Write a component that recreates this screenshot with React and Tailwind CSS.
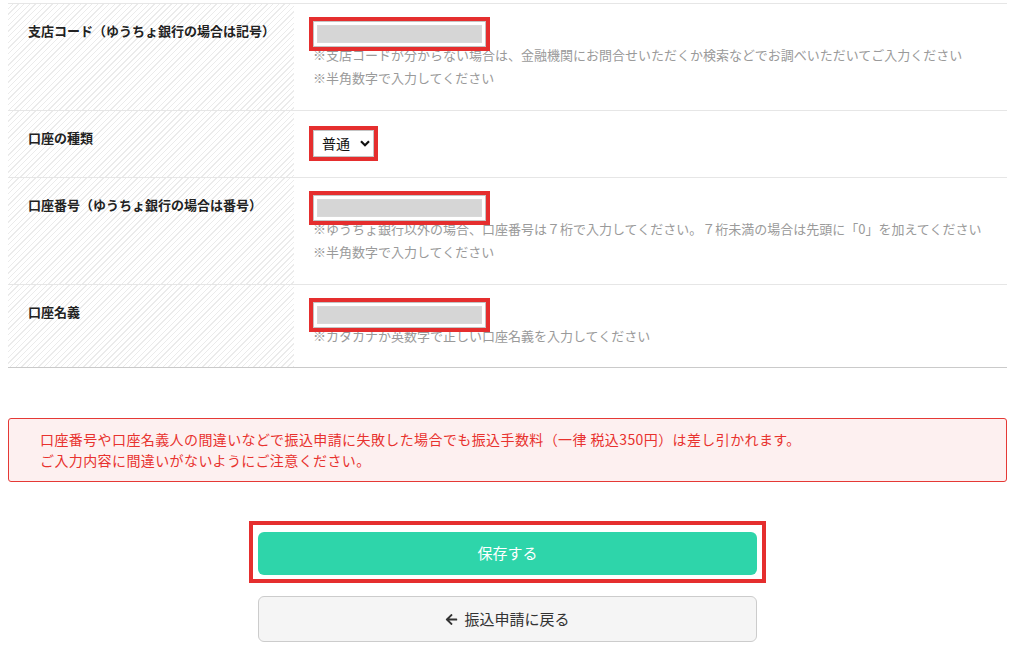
import { FaArrowLeft } from "react-icons/fa";

const font = "font-['Meiryo','Noto_Sans_CJK_JP','Noto_Sans',sans-serif]";

const hatch =
  "bg-[repeating-linear-gradient(135deg,#ffffff_0px,#ffffff_3px,#ebebeb_3px,#ebebeb_4px)]";

// Redacted text field with the red highlight frame drawn as an outline
const MaskedInput = () => (
  <div className="w-[173px] h-[26px] border border-[#c4c4c4] bg-white p-[3px] outline-[4px] outline-solid outline-[#e52e2e] outline-offset-[0px]">
    <div className="h-full border border-[#d9d9d9] bg-[#d6d6d6]" />
  </div>
);

const Notes = ({ lines }) => (
  <div className="-mt-[4px] text-[13px] leading-[23px] text-[#9a9a9a]">
    {lines.map((l) => (
      <p key={l}>{l}</p>
    ))}
  </div>
);

const Row = ({ label, children, valuePad = "pt-[17px] pb-[21px]" }) => (
  <div className="flex border-t border-[#e6e6e6]">
    <div className={`w-[286px] shrink-0 px-[20px] pt-[13px] pb-[20px] ${hatch}`}>
      <span className="text-[13px] leading-[20px] font-bold text-[#222]">{label}</span>
    </div>
    <div className={`flex-1 pl-[19px] pr-[10px] ${valuePad}`}>{children}</div>
  </div>
);

export default function App() {
  return (
    <div className={`${font} bg-white min-h-[656px] pt-[3px] pb-[14px]`}>
      <div className="mx-[8px] border-b border-[#cacaca]">
        <Row label="支店コード（ゆうちょ銀行の場合は記号）">
          <MaskedInput />
          <Notes
            lines={[
              "※支店コードが分からない場合は、金融機関にお問合せいただくか検索などでお調べいただいてご入力ください",
              "※半角数字で入力してください",
            ]}
          />
        </Row>
        <Row label="口座の種類" valuePad="pt-[19px] pb-[20px]">
          <div className="inline-flex items-center gap-[10px] h-[27px] w-[61px] border border-[#c4c4c4] bg-white pl-[8px] text-[14px] text-[#111] outline-[4px] outline-solid outline-[#e52e2e]">
            <span>普通</span>
            <svg width="10" height="7" viewBox="0 0 10 7">
              <path d="M1 1.2 5 5.2 9 1.2" fill="none" stroke="#111" strokeWidth="2.2" />
            </svg>
          </div>
        </Row>
        <Row label="口座番号（ゆうちょ銀行の場合は番号）">
          <MaskedInput />
          <Notes
            lines={[
              "※ゆうちょ銀行以外の場合、口座番号は７桁で入力してください。７桁未満の場合は先頭に「0」を加えてください",
              "※半角数字で入力してください",
            ]}
          />
        </Row>
        <Row label="口座名義" valuePad="pt-[17px] pb-[20px]">
          <MaskedInput />
          <Notes lines={["※カタカナか英数字で正しい口座名義を入力してください"]} />
        </Row>
      </div>

      {/* fee warning */}
      <div className="mx-[8px] mt-[50px] rounded-[3px] border border-[#e53935] bg-[#fdf0f0] px-[31px] py-[10px] text-[14px] leading-[21px] tracking-[0.4px] text-[#e8322e]">
        <p>口座番号や口座名義人の間違いなどで振込申請に失敗した場合でも振込手数料（一律 税込350円）は差し引かれます。</p>
        <p>ご入力内容に間違いがないようにご注意ください。</p>
      </div>

      <div className="mt-[39px] flex flex-col items-center">
        <div className="border-[4px] border-[#e52e2e] px-[5px] pt-[7px] pb-[4px]">
          <button className="w-[499px] h-[43px] rounded-[6px] bg-[#2ed5aa] text-[15px] text-white">
            保存する
          </button>
        </div>
        <button className="mt-[13px] w-[499px] h-[46px] rounded-[6px] border border-[#cccccc] bg-[#f5f5f5] text-[15px] text-[#333] flex items-center justify-center gap-[6px]">
          <FaArrowLeft className="w-[13px] h-[13px]" />
          <span>振込申請に戻る</span>
        </button>
      </div>
    </div>
  );
}
